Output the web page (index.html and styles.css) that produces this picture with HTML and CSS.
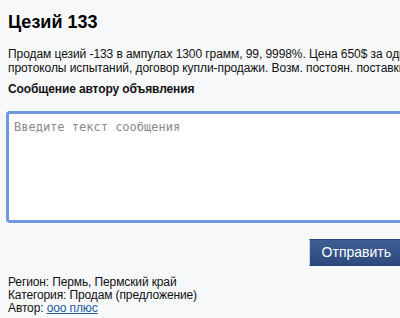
FILE: index.html
```html
<!DOCTYPE html>
<html lang="ru">
<head>
<meta charset="utf-8">
<title>Цезий 133</title>
<link rel="stylesheet" href="styles.css">
</head>
<body>
<div class="page">
  <h1 class="title">Цезий 133</h1>
  <p class="desc">Продам цезий -133 в ампулах 1300 грамм, 99, 9998%. Цена 650$ за один грамм. Есть сертификаты,<br>протоколы испытаний, договор купли-продажи. Возм. постоян. поставки.</p>
  <h2 class="form-title">Сообщение автору объявления</h2>
  <form class="form">
    <textarea class="message" placeholder="Введите текст сообщения"></textarea>
    <div class="actions">
      <button type="button" class="send">Отправить</button>
    </div>
  </form>
  <div class="meta">
    <div>Регион: Пермь, Пермский край</div>
    <div>Категория: Продам (предложение)</div>
    <div>Автор: <a href="#" class="author">ооо плюс</a></div>
  </div>
</div>
</body>
</html>
```

FILE: styles.css
```css
html, body {
  margin: 0;
  padding: 0;
  background: #f7f8fa;
  overflow: hidden;
}
body {
  font-family: "Liberation Sans", Arial, sans-serif;
  color: #111;
}
.page {
  padding: 11px 0 0 8px;
  width: 600px;
}
.title {
  margin: 0;
  font-size: 18px;
  line-height: 22px;
  font-weight: bold;
  color: #000;
}
.desc {
  margin: 14px 0 0 0;
  font-size: 12px;
  line-height: 14px;
  letter-spacing: -0.07px;
  white-space: nowrap;
}
.form-title {
  margin: 7px 0 0 0;
  font-size: 12px;
  line-height: 14px;
  letter-spacing: -0.12px;
  font-weight: bold;
}
.form {
  margin: 15px 0 0 -2px;
  width: 398px;
}
.message {
  display: block;
  box-sizing: border-box;
  width: 460px;
  height: 112px;
  margin: 0;
  padding: 6px 5px;
  border: 3px solid #7098dc;
  border-radius: 4px;
  background: #fff;
  font-family: "DejaVu Sans Mono", monospace;
  font-size: 12px;
  line-height: 14px;
  resize: none;
  outline: none;
}
.message::placeholder {
  color: #8a8a8a;
}
.actions {
  display: flex;
  justify-content: flex-end;
  margin-top: 16px;
}
.send {
  height: 27px;
  padding: 0 12px;
  border: 1px solid #27457a;
  border-left-color: #c9d3e3;
  border-radius: 0;
  background: linear-gradient(#3f5e93, #2c4a7e);
  color: #fff;
  font-family: "Liberation Sans", Arial, sans-serif;
  font-size: 14px;
  line-height: 25px;
  cursor: pointer;
}
.meta {
  margin-top: 10px;
  font-size: 12px;
  line-height: 13px;
  letter-spacing: -0.12px;
}
.author {
  color: #1c5a9e;
  text-decoration: underline;
}
```
